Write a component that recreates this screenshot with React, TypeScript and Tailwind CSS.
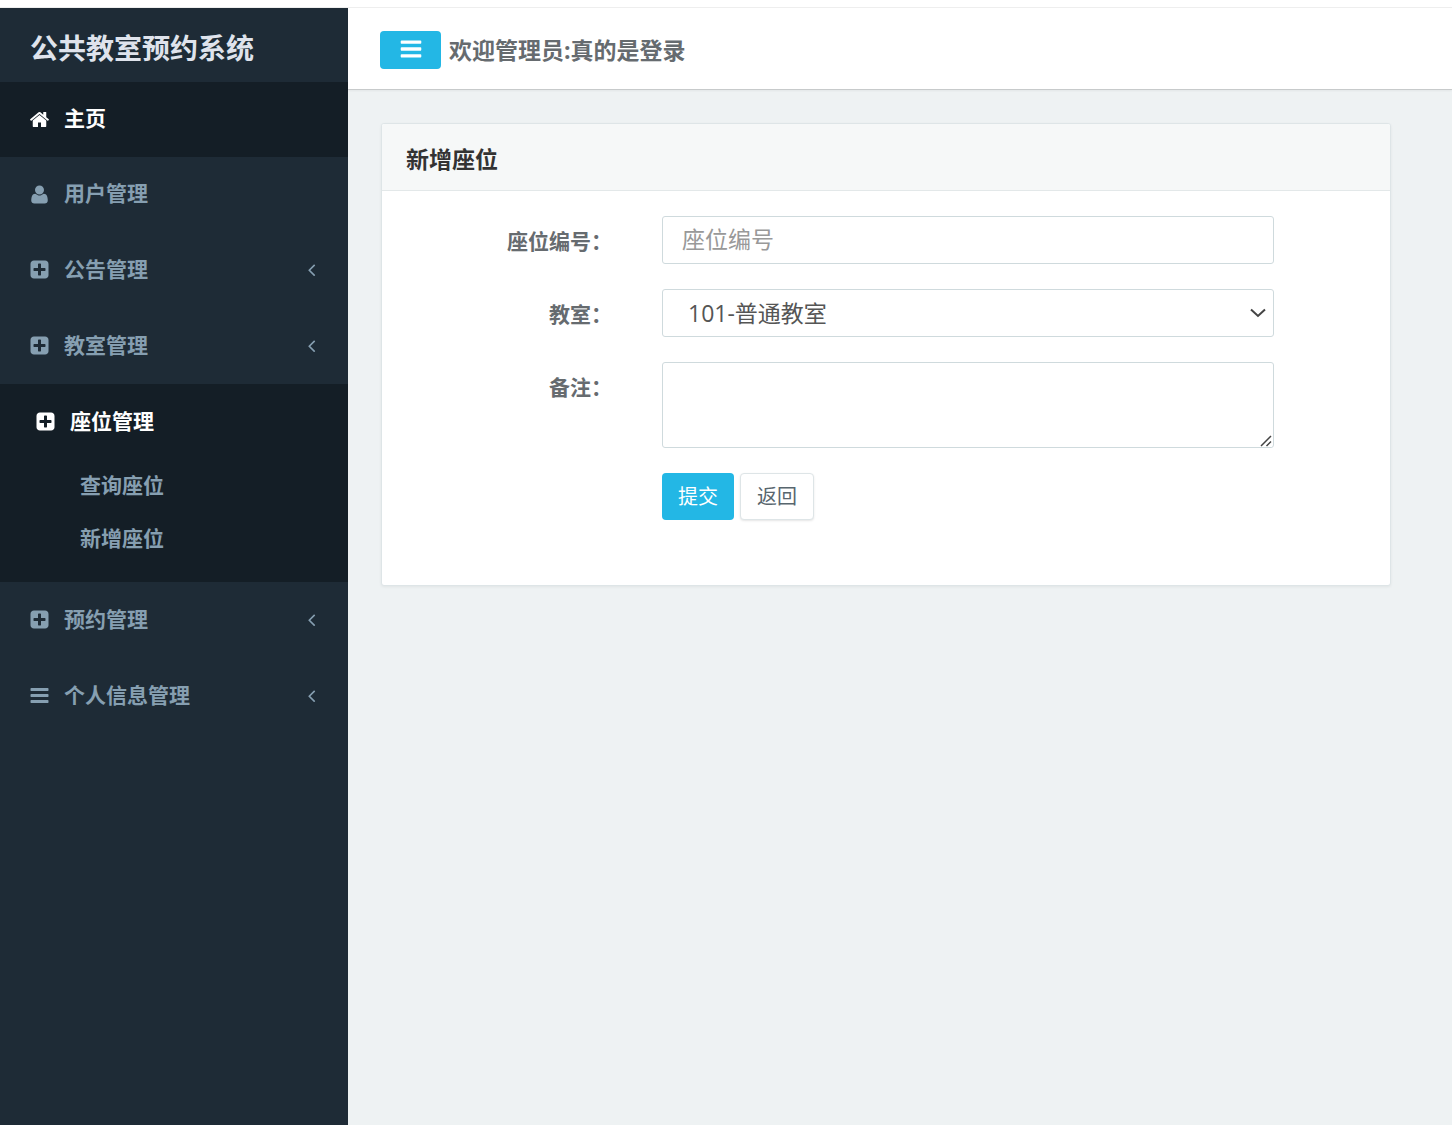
import React from "react";

type Item = {
  title: string;
  icon: string;
  expandable?: boolean;
  active?: boolean;
  children?: string[];
};

const icons = {
  home: "M1472 992v480q0 26-19 45t-45 19h-384v-384h-256v384h-384q-26 0-45-19t-19-45v-480q0-1 .5-3t.5-3l575-474 575 474q1 2 1 6zm223-69l-62 74q-8 9-21 11h-3q-13 0-21-7l-692-577-692 577q-12 8-24 7-13-2-21-11l-62-74q-8-10-7-23.5t11-21.5l719-599q32-26 76-26t76 26l244 204v-195q0-14 9-23t23-9h192q14 0 23 9t9 23v408l219 182q10 8 11 21.5t-7 23.5z",
  user: "M1600 1405q0 120-73 189.5t-194 69.5h-874q-121 0-194-69.5t-73-189.5q0-53 3.500-103.500t14-109 26.500-108.500 43-97.500 62-81 85.500-53.500 111.500-20q9 0 42 21.500t74.500 48 108 48 133.500 21.500 133.500-21.500 108-48 74.500-48 42-21.500q61 0 111.500 20t85.500 53.500 62 81 43 97.500 26.500 108.500 14 109 3.500 103.500zm-320-893q0 159-112.500 271.500t-271.500 112.500-271.500-112.500-112.500-271.500 112.500-271.500 271.500-112.500 271.500 112.500 112.500 271.500z",
  plus: "M1408 960v-128q0-26-19-45t-45-19h-320v-320q0-26-19-45t-45-19h-128q-26 0-45 19t-19 45v320h-320q-26 0-45 19t-19 45v128q0 26 19 45t45 19h320v320q0 26 19 45t45 19h128q26 0 45-19t19-45v-320h320q26 0 45-19t19-45zm256-544v960q0 119-84.5 203.5t-203.5 84.5h-960q-119 0-203.5-84.5t-84.5-203.5v-960q0-119 84.5-203.5t203.5-84.5h960q119 0 203.5 84.5t84.5 203.5z",
  bars: "M1664 1344v128q0 26-19 45t-45 19h-1408q-26 0-45-19t-19-45v-128q0-26 19-45t45-19h1408q26 0 45 19t19 45zm0-512v128q0 26-19 45t-45 19h-1408q-26 0-45-19t-19-45v-128q0-26 19-45t45-19h1408q26 0 45 19t19 45zm0-512v128q0 26-19 45t-45 19h-1408q-26 0-45-19t-19-45v-128q0-26 19-45t45-19h1408q26 0 45 19t19 45z",
  left: "M1203 544q0 13-10 23l-393 393 393 393q10 10 10 23t-10 23l-50 50q-10 10-23 10t-23-10l-466-466q-10-10-10-23t10-23l466-466q10-10 23-10t23 10l50 50q10 10 10 23z",
};

const menu: Item[] = [
  { title: "主页", icon: icons.home, active: true },
  { title: "用户管理", icon: icons.user },
  { title: "公告管理", icon: icons.plus, expandable: true },
  { title: "教室管理", icon: icons.plus, expandable: true },
  {
    title: "座位管理",
    icon: icons.plus,
    expandable: true,
    active: true,
    children: ["查询座位", "新增座位"],
  },
  { title: "预约管理", icon: icons.plus, expandable: true },
  { title: "个人信息管理", icon: icons.bars, expandable: true },
];

const Icon = ({ d, className }: { d: string; className: string }) => (
  <svg viewBox="0 0 1792 1792" fill="currentColor" aria-hidden="true" className={className}>
    <path d={d} />
  </svg>
);

const MenuItem = ({ item }: { item: Item }) => (
  <li className={item.active ? "bg-[#141e26] text-white" : ""}>
    <a
      href="#"
      className={`flex items-center gap-[14px] pr-[26px] pb-px ${item.expandable ? "h-[76px]" : "h-[75px]"} ${
        item.children ? "pl-[35px]" : "pl-[29px]"
      }`}
    >
      <Icon d={item.icon} className="size-[21px]" />
      <span>{item.title}</span>
      {item.expandable && !item.children && <Icon d={icons.left} className="ml-auto size-[21px]" />}
    </a>

    {/* Submenu */}
    {item.children && (
      <ul className="pb-4 text-[#869fb1]">
        {item.children.map((child) => (
          <li key={child}>
            <a href="#" className="flex h-[53px] items-center pb-px pl-20">
              {child}
            </a>
          </li>
        ))}
      </ul>
    )}
  </li>
);

const labelClass = "pt-[10px] text-right text-[21px] leading-[31px] font-bold";
const controlClass =
  "block w-full rounded-[3px] border border-[#cfdadd] bg-white text-[23px] text-[#555] outline-none";

const App: React.FC = () => {
  return (
    <div className="flex min-h-screen flex-col bg-[#eef2f3] font-['Open_Sans','Noto_Sans_CJK_SC',sans-serif] text-[#666b6f]">
      <div className="h-2 border-b border-[#eee] bg-white" />

      <div className="flex flex-1">
        {/* Sidebar */}
        <aside className="w-[348px] shrink-0 bg-[#1e2b36] text-[21px] font-bold text-[#869fb1]">
          <h1 className="flex h-[74px] items-center pt-[6px] pl-[30px] text-[28px] text-[#dfe3ec]">
            公共教室预约系统
          </h1>
          <nav>
            <ul>
              {menu.map((item) => (
                <MenuItem key={item.title} item={item} />
              ))}
            </ul>
          </nav>
        </aside>

        <div className="min-w-0 flex-1">
          {/* Header */}
          <header className="flex h-[81px] items-center gap-2 bg-white px-8 pt-[2px] shadow-[0_2px_2px_rgba(0,0,0,0.05),0_1px_0_rgba(0,0,0,0.12)]">
            <button
              type="button"
              aria-label="菜单"
              className="flex h-[38px] w-[61px] items-center justify-center rounded bg-[#23b7e5] pb-[2px] text-white"
            >
              <Icon d={icons.bars} className="size-6" />
            </button>
            <span className="pt-[2px] text-[23px] font-bold">欢迎管理员:真的是登录</span>
          </header>

          {/* Form panel */}
          <main className="pt-[34px] pr-[61px] pl-[33px]">
            <section className="rounded-[3px] border border-[#dee5e7] bg-white shadow-[0_1px_3px_rgba(0,0,0,0.06)]">
              <h2 className="flex h-[67px] items-center rounded-t-[2px] border-b border-[#e3e8e9] bg-[#f6f8f8] px-6 pt-1 text-[23px] font-bold text-[#333]">
                新增座位
              </h2>
              <form className="grid grid-cols-[230fr_612fr] gap-x-[50px] gap-y-[25px] pt-[25px] pr-[116px] pb-[65px]">
                <label htmlFor="number" className={labelClass}>
                  座位编号：
                </label>
                <input
                  id="number"
                  type="text"
                  placeholder="座位编号"
                  className={`${controlClass} h-12 px-[19px] pb-[2px] placeholder:text-[#999]`}
                />

                <label htmlFor="room" className={labelClass}>
                  教室：
                </label>
                <div className="relative">
                  <select id="room" className={`${controlClass} h-12 appearance-none pr-10 pl-[25px]`}>
                    <option>101-普通教室</option>
                  </select>
                  <svg
                    viewBox="0 0 16 10"
                    fill="none"
                    stroke="#444"
                    strokeWidth="2"
                    aria-hidden="true"
                    className="pointer-events-none absolute top-[19px] right-2 h-[10px] w-4"
                  >
                    <path d="M1 1.500L8 8l7-6.500" />
                  </svg>
                </div>

                <label htmlFor="remark" className={labelClass}>
                  备注：
                </label>
                <div className="relative">
                  <textarea id="remark" className={`${controlClass} h-[86px] resize-y px-[19px] py-2`} />
                  {/* Resize grip */}
                  <svg
                    viewBox="0 0 12 12"
                    stroke="#444"
                    strokeWidth="1.5"
                    aria-hidden="true"
                    className="pointer-events-none absolute right-[2px] bottom-px size-3 bg-white"
                  >
                    <path d="M1 11L11 1M6.500 11L11 6.500" />
                  </svg>
                </div>

                <div className="col-start-2 flex gap-[6px] text-[20px]">
                  <button type="submit" className="h-[47px] rounded bg-[#23b7e5] px-4 text-white">
                    提交
                  </button>
                  <button
                    type="button"
                    className="h-[47px] rounded border border-[#dee5e7] bg-white px-4 text-[#58666e] shadow-[0_1px_2px_rgba(90,90,90,0.15)]"
                  >
                    返回
                  </button>
                </div>
              </form>
            </section>
          </main>
        </div>
      </div>
    </div>
  );
};

export default App;
